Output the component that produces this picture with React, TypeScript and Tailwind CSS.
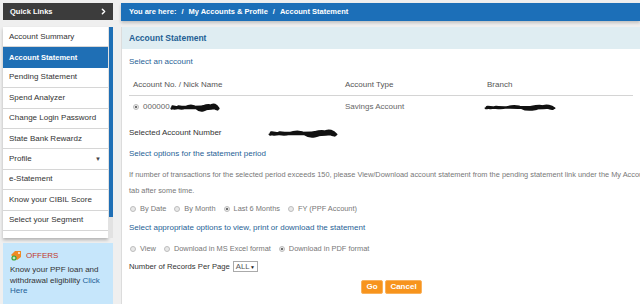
import { ChevronRight } from 'lucide-react';

const sideLinks = [
  'Account Summary',
  'Account Statement',
  'Pending Statement',
  'Spend Analyzer',
  'Change Login Password',
  'State Bank Rewardz',
  'Profile',
  'e-Statement',
  'Know your CIBIL Score',
  'Select your Segment',
  'Update Aadhaar with Bank',
];

const Radio = ({ checked = false }: { checked?: boolean }) => (
  <span className="w-[6px] h-[6px] rounded-full border border-[#bdbdbd] bg-[#e9e9e9] flex items-center justify-center shrink-0">
    {checked && <span className="w-[2px] h-[2px] rounded-full bg-[#444]" />}
  </span>
);

const RadioOption = ({ label, checked = false }: { label: string; checked?: boolean }) => (
  <label className="flex items-center gap-[4px] text-[#777]">
    <Radio checked={checked} />
    <span>{label}</span>
  </label>
);

// black scribble used to hide account details
const Scribble = ({ w, h }: { w: number; h: number }) => (
  <svg width={w} height={h} viewBox="0 0 60 10" preserveAspectRatio="none">
    <path
      d="M2 6 C8 3, 12 8, 18 5 S28 2, 32 6 S44 8, 48 4 S56 3, 58 6 M3 4 C14 7, 22 3, 30 5 S46 7, 57 5 M5 6 C16 3, 30 8, 40 4 S52 6, 57 7 M10 4 C20 6, 36 3, 50 5"
      fill="none"
      stroke="#111"
      strokeWidth="3"
      strokeLinecap="round"
    />
  </svg>
);

const OfferIcon = () => (
  <svg width="12" height="11" viewBox="0 0 12 11">
    <path d="M1 5 L5 1 L11 1 L11 7 L7 10 Z" fill="#f08a24" />
    <circle cx="9" cy="3" r="0.9" fill="#fff" />
    <circle cx="4" cy="8" r="2.6" fill="#3aa53a" />
    <path d="M4 6.6 V9.4 M2.6 8 H5.4" stroke="#fff" strokeWidth="0.9" />
  </svg>
);

export default function App() {
  return (
    <div className="w-[640px] h-[304px] overflow-hidden bg-[#efefef] flex pt-[3px] font-['Liberation_Sans',Arial,sans-serif] text-[8px] leading-[10px]">
      {/* Sidebar */}
      <div className="w-[110px] ml-[3px] shrink-0 flex flex-col">
        <div className="h-[17px] bg-[#3c3c3c] flex items-center justify-between pl-[7px] pr-[5px] text-white font-bold text-[7.5px]">
          <span>Quick Links</span>
          <ChevronRight className="w-[9px] h-[9px]" strokeWidth={4} />
        </div>

        <div className="mt-[7px] flex h-[211px]">
          <div className="w-[105px] bg-white shadow-[0_2px_3px_rgba(0,0,0,0.25)] overflow-hidden">
            {sideLinks.map((link, i) => (
              <div
                key={link}
                className={
                  i === 1
                    ? 'h-[20.4px] flex items-center px-[6px] bg-[#1f6fb5] text-white font-bold text-[7.5px] whitespace-nowrap'
                    : 'h-[20.4px] flex items-center justify-between pl-[6px] pr-[7px] text-[#333] border-b border-[#d6d6d6] whitespace-nowrap'
                }
              >
                <span>{link}</span>
                {link === 'Profile' && <span className="text-[6px] text-[#444]">▼</span>}
              </div>
            ))}
          </div>
          <div className="w-[5px] bg-[#e2e2e2] pl-[1px]">
            <div className="w-[4px] h-[190px] bg-[#1f6fb5]" />
          </div>
        </div>

        <div className="mt-[5px] flex-1 bg-[#c6e6fb] px-[7px] pt-[7px]">
          <div className="flex items-center gap-[4px]">
            <OfferIcon />
            <span className="text-[#c0392b]">OFFERS</span>
          </div>
          <p className="mt-[4px] text-[#333] leading-[10.5px]">
            Know your PPF loan and withdrawal eligibility <span className="text-[#1f5f96]">Click Here</span>
          </p>
        </div>
      </div>

      {/* Main */}
      <div className="ml-[8px] flex-1 min-w-0 flex flex-col">
        <div className="h-[18px] bg-[#1c6fb8] shadow-[0_2px_3px_rgba(0,0,0,0.2)] flex items-center gap-[5px] px-[8px] text-white font-bold text-[7.5px] whitespace-nowrap">
          <span>You are here:</span>
          <span>/</span>
          <span>My Accounts &amp; Profile</span>
          <span>/</span>
          <span>Account Statement</span>
        </div>

        <div className="mt-[6px] flex-1 flex flex-col bg-white border-l border-[#dcdcdc]">
          <div className="h-[22px] bg-[#dfedf2] flex items-center px-[7px] text-[8.5px] font-bold text-[#1e5f94]">
            Account Statement
          </div>

          <div className="px-[7px] pt-[8px] whitespace-nowrap">
            <div className="text-[#1f5f96]">Select an account</div>

            {/* account table */}
            <div className="mt-[8px] h-[21px] grid grid-cols-[212px_142px_1fr] items-center pl-[4px] border-b border-[#d4d4d4] text-[#555]">
              <span>Account No. / Nick Name</span>
              <span>Account Type</span>
              <span>Branch</span>
            </div>
            <div className="h-[22px] grid grid-cols-[212px_142px_1fr] items-center pl-[4px] text-[#666]">
              <span className="flex items-center gap-[4px]">
                <Radio checked />
                <span className="flex items-center">
                  000000
                  <Scribble w={50} h={9} />
                </span>
              </span>
              <span>Savings Account</span>
              <span className="-ml-[3px]">
                <Scribble w={72} h={7} />
              </span>
            </div>

            <div className="mt-[10px] flex items-center text-[#333]">
              <span className="w-[139px]">Selected Account Number</span>
              <Scribble w={70} h={9} />
            </div>

            <div className="mt-[11px] text-[#1f5f96]">Select options for the statement period</div>

            <div className="mt-[8px] text-[7.4px] leading-[16px] text-[#777]">
              <div>
                If number of transactions for the selected period exceeds 150, please View/Download account statement from the pending statement link under the My Accounts &amp; Profile
              </div>
              <div>tab after some time.</div>
            </div>

            <div className="mt-[5px] flex items-center gap-[8px] pl-[1px] text-[7.4px]">
              <RadioOption label="By Date" />
              <RadioOption label="By Month" />
              <RadioOption label="Last 6 Months" checked />
              <RadioOption label="FY (PPF Account)" />
            </div>

            <div className="mt-[9px] text-[#1f5f96]">Select appropriate options to view, print or download the statement</div>

            <div className="mt-[11px] flex items-center gap-[8px] pl-[1px] text-[7.4px]">
              <RadioOption label="View" />
              <RadioOption label="Download in MS Excel format" />
              <RadioOption label="Download in PDF format" checked />
            </div>

            <div className="mt-[7px] flex items-center gap-[3px] text-[#333] text-[7.7px]">
              <span>Number of Records Per Page</span>
              <span className="h-[11px] w-[25px] border border-[#aaa] bg-white flex items-center justify-between px-[2px] text-[#555]">
                ALL
                <span className="text-[5px] text-[#222]">▼</span>
              </span>
            </div>

            <div className="mt-[8px] ml-[232px] flex gap-[2px]">
              <button className="h-[14px] w-[22px] bg-[#f7941d] border border-[#f9b25e] rounded-[2px] text-white font-bold">Go</button>
              <button className="h-[14px] w-[37px] bg-[#f7941d] border border-[#f9b25e] rounded-[2px] text-white font-bold">Cancel</button>
            </div>
          </div>
        </div>
      </div>
    </div>
  );
}
